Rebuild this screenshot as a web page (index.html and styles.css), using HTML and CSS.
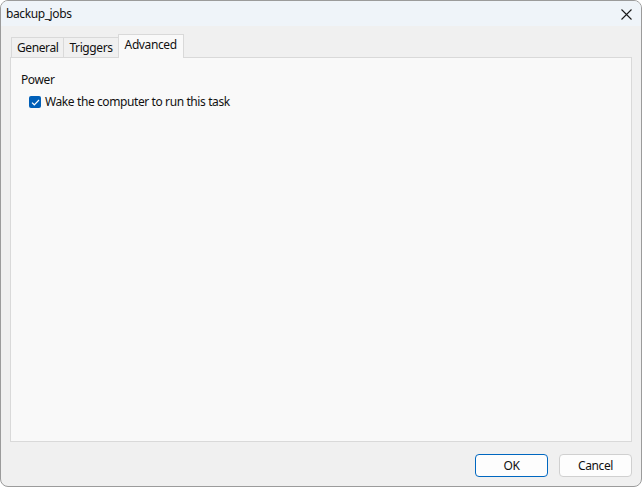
FILE: index.html
```html
<!DOCTYPE html>
<html>
<head>
<meta charset="utf-8">
<link rel="stylesheet" href="styles.css">
</head>
<body>
<div class="window">
  <div class="titlebar">
    <span class="title">backup_jobs</span>
    <span class="close"><svg width="11" height="11" viewBox="0 0 11 11"><path d="M0.5 0.5 L10.5 10.5 M10.5 0.5 L0.5 10.5" stroke="#1a1a1a" stroke-width="1.1" fill="none"/></svg></span>
  </div>
  <div class="body">
    <div class="tabs">
      <div class="tab">General</div>
      <div class="tab">Triggers</div>
      <div class="tab active">Advanced</div>
    </div>
    <div class="panel">
      <div class="group-label">Power</div>
      <label class="check">
        <span class="box"><svg width="9" height="7" viewBox="0 0 9 7"><path d="M1 3.6 L3.3 5.8 L8 1" stroke="#fff" stroke-width="1.2" fill="none"/></svg></span>
        <span>Wake the computer to run this task</span>
      </label>
    </div>
    <div class="buttons">
      <button class="btn default">OK</button>
      <button class="btn">Cancel</button>
    </div>
  </div>
</div>
</body>
</html>
```
FILE: styles.css
```css
html, body {
  margin: 0;
  padding: 0;
  background: #ffffff;
}
body {
  font-family: "Segoe UI", "Noto Sans", sans-serif;
  font-size: 12px;
  letter-spacing: -0.4px;
  color: #111111;
}
.window {
  width: 642px;
  height: 487px;
  box-sizing: border-box;
  border: 1px solid #9b9b9b;
  border-radius: 8px;
  background: #f0f0f0;
  display: flex;
  flex-direction: column;
  overflow: hidden;
}
.titlebar {
  height: 25px;
  background: #eff4f9;
  display: flex;
  align-items: center;
  justify-content: space-between;
  padding: 0 9px 0 5px;
  flex-shrink: 0;
}
.title {
  font-size: 12px;
}
.close {
  display: flex;
  align-items: center;
  margin-top: 1px;
}
.body {
  flex: 1;
  display: flex;
  flex-direction: column;
  padding: 8px 9px 0 9px;
}
.tabs {
  display: flex;
  align-items: flex-end;
  height: 23px;
  padding-left: 1px;
}
.tab {
  height: 20px;
  box-sizing: border-box;
  border: 1px solid #d9d9d9;
  border-bottom: none;
  background: #f0f0f0;
  padding: 0 5px 0 5px;
  display: flex;
  align-items: center;
  margin-right: -1px;
  line-height: 1;
}
.tab.active {
  height: 24px;
  background: #f9f9f9;
  position: relative;
  margin-bottom: -1px;
  z-index: 1;
  padding: 0 6px 4px 6px;
}
.panel {
  height: 385px;
  box-sizing: border-box;
  border: 1px solid #d9d9d9;
  background: #f9f9f9;
  padding: 14px 10px 0 10px;
}
.group-label {
  line-height: 16px;
}
.check {
  display: flex;
  align-items: center;
  margin-top: 6px;
  margin-left: 8px;
  gap: 4px;
  line-height: 16px;
}
.box {
  width: 12px;
  height: 12px;
  border-radius: 2px;
  background: #005fb8;
  display: flex;
  align-items: center;
  justify-content: center;
}
.buttons {
  display: flex;
  justify-content: flex-end;
  gap: 11px;
  margin-top: 12px;
}
.btn {
  width: 73px;
  height: 23px;
  box-sizing: border-box;
  border: 1px solid #d0d0d0;
  border-radius: 4px;
  background: #fdfdfd;
  font-family: inherit;
  font-size: 12px;
  letter-spacing: inherit;
  color: #111111;
  padding: 0;
}
.btn.default {
  border: 1px solid #0067c0;
}
```
